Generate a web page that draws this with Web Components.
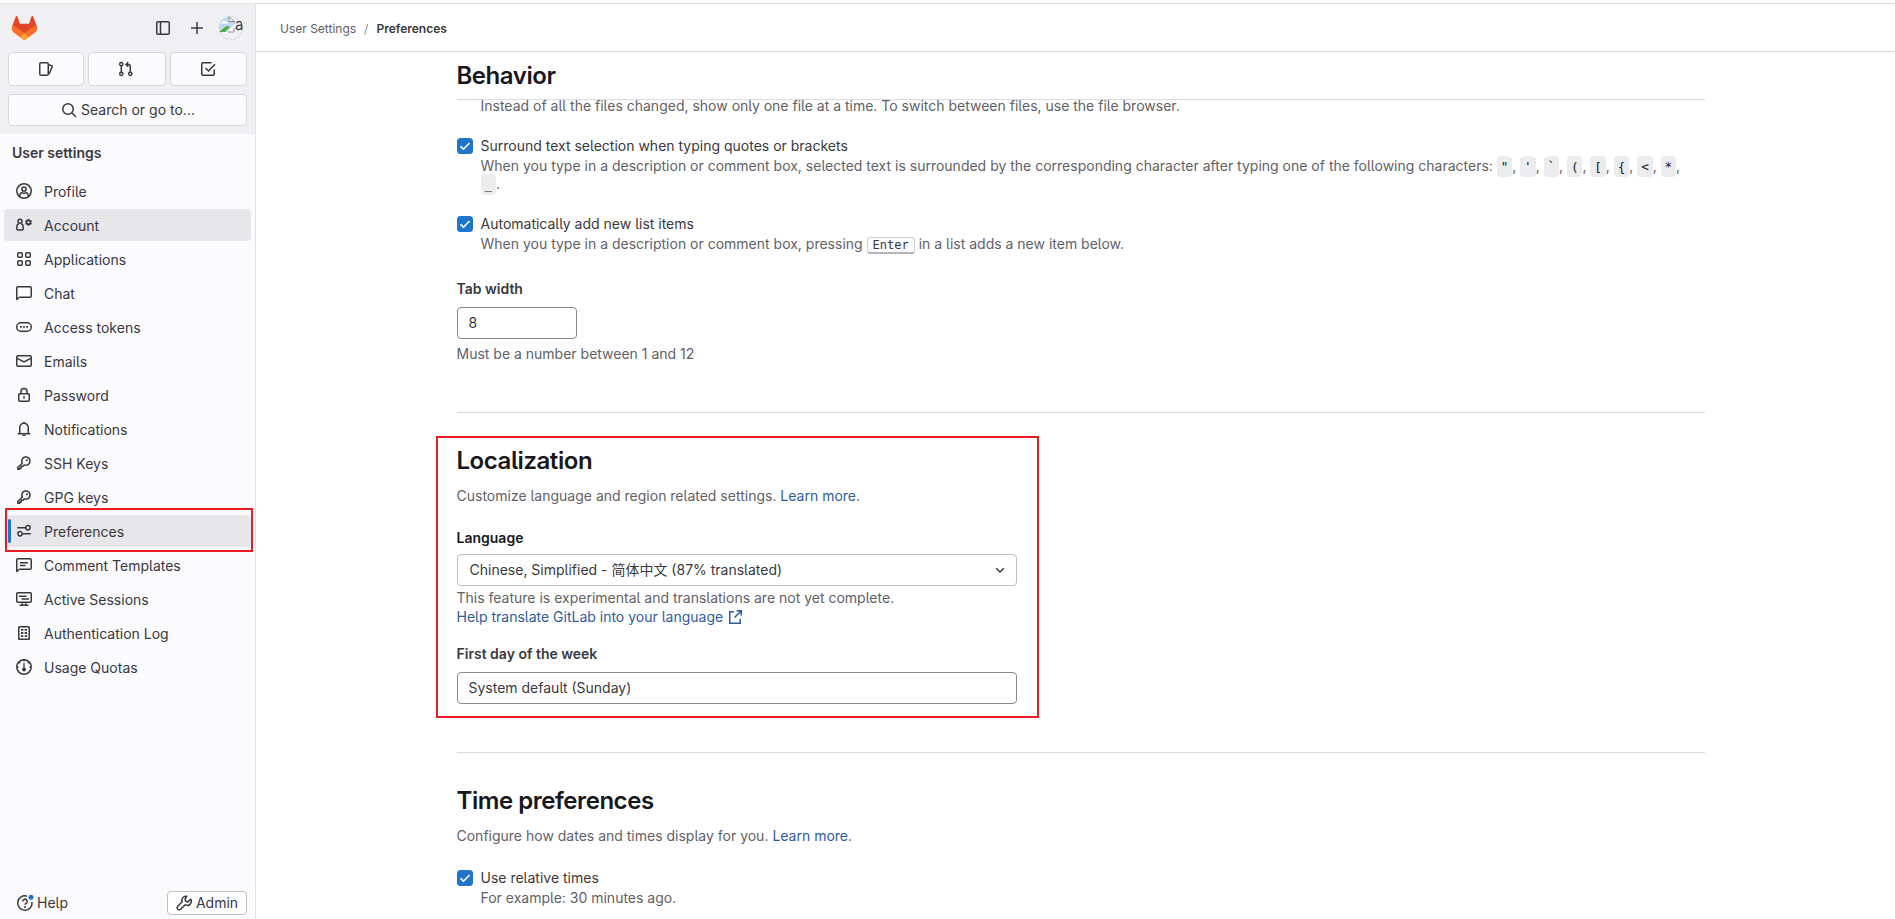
<!DOCTYPE html>
<html lang="en">
<head>
<meta charset="utf-8">
<title>Preferences · User Settings</title>
<style>
html,body{margin:0;height:100%;overflow:hidden;background:#fff}
body{font-family:Inter,"Noto Sans CJK SC",sans-serif;font-size:14px;line-height:20px;color:#3a383f;font-feature-settings:"cv05" 1}
</style>
</head>
<body>
<settings-app></settings-app>
<script>
const S='fill="none" stroke="currentColor" stroke-width="1.5"';
const ICONS={
 sidebar:`<g ${S}><rect x="1.75" y="1.75" width="12.5" height="12.5" rx="1.3"/><path d="M5.5 2v12"/></g>`,
 plus:`<path ${S} d="M8 2v12M2 8h12"/>`,
 issues:`<g ${S} stroke-linejoin="round"><rect x="1.75" y="1.75" width="8.5" height="12.5" rx="1.3"/><path d="M11 3.7l2.6.9c.5.2.8.6.6 1.2L11 13.2"/></g>`,
 merge:`<g ${S}><circle cx="3.3" cy="3.2" r="1.6"/><circle cx="3.3" cy="12.8" r="1.6"/><circle cx="12.3" cy="12.8" r="1.6"/><path d="M3.3 4.8v6.4M12.3 11.2V5.5a2 2 0 0 0-2-2H8M10.300 1.2L8 3.5l2.3 2.3"/></g>`,
 todo:`<g ${S}><path d="M11.5 1.75H3A1.25 1.25 0 0 0 1.75 3v10A1.25 1.25 0 0 0 3 14.25h10A1.25 1.25 0 0 0 14.25 13V8.5M5.5 7L8.5 10 15 3.3"/></g>`,
 search:`<g ${S}><circle cx="7" cy="7" r="5.25"/><path d="M10.8 10.8L15 15"/></g>`,
 profile:`<g ${S}><circle cx="8" cy="8" r="7.25"/><circle cx="8" cy="6" r="2.1"/><path d="M3.6 13.4c.1-.9.3-2 .9-2.9.3-.6.9-1 1.6-1.1.5.7 1.1 1 1.9 1s1.400-.3 1.900-1c.7.1 1.300.5 1.600 1.100.6.9.8 2 .9 2.900"/></g>`,
 account:`<g ${S}><circle cx="4" cy="4.300" r="2"/><path d="M2.700 6.500C1.500 7.100.75 8.400.75 10.200v1.250c0 .8.500 1.500 1.250 1.500h4c.750 0 1.250-.7 1.250-1.500V10.200c0-1.800-.750-3.100-1.950-3.700"/><circle cx="12.500" cy="5.300" r="2" stroke-width="1.700"/><path stroke-width="1.500" d="M12.500 1.800v1.800M12.500 7v1.800M9.450 3.550l1.500.9M15.550 3.550l-1.500.9M9.450 7.050l1.500-.9M15.550 7.050l-1.500-.9"/></g>`,
 apps:`<g ${S}><rect x="1.750" y="1.750" width="4.500" height="4.500" rx="1"/><rect x="9.750" y="1.750" width="4.500" height="4.500" rx="1"/><rect x="1.750" y="9.750" width="4.500" height="4.500" rx="1"/><rect x="9.750" y="9.750" width="4.500" height="4.500" rx="1"/></g>`,
 chat:`<path ${S} stroke-linejoin="round" d="M.75 14.500V3c0-.7.550-1.250 1.250-1.250h12c.7 0 1.250.550 1.250 1.250v8c0 .7-.550 1.250-1.250 1.250H3.500z"/>`,
 token:`<rect ${S} x=".75" y="3.750" width="14.500" height="8.500" rx="4"/><path fill="currentColor" d="M4 7h1.800v1.800H4zM7.100 7h1.800v1.800H7.100zM10.200 7H12v1.800h-1.800z"/>`,
 mail:`<g ${S}><rect x=".75" y="2.750" width="14.500" height="10.500" rx="1.250"/><path d="M1.200 5.300L8 9l6.800-3.700"/></g>`,
 lock:`<g ${S}><rect x="2.750" y="6.750" width="10.500" height="7.500" rx="1"/><path d="M5 6.500V4.500a3 3 0 0 1 6 0v2M8 9.300v2.400" /></g>`,
 bell:`<g ${S}><path d="M3.750 12.500v-6a4.250 4.250 0 0 1 8.500 0v6M1.700 12.750h12.600M8 2.200V.8"/><path d="M6.300 14.250h3.400" stroke-width="1.300"/></g>`,
 key:`<g ${S} stroke-linejoin="round"><path d="M6.300 8.200A4.150 4.150 0 1 1 8.300 9.900L7 11.200H5.300v1.700H3.800v1.350H1.750V12.500z"/></g><circle cx="10.900" cy="5.200" r="1" fill="currentColor"/>`,
 prefs:`<g ${S}><circle cx="12" cy="4.750" r="2.150"/><circle cx="4" cy="10.750" r="2.150"/><path d="M1.200 4.750H9.800M6.200 10.750H14.800"/></g>`,
 comment:`<g ${S} stroke-linejoin="round"><path d="M.75 14.500V3c0-.7.550-1.250 1.250-1.250h12c.7 0 1.250.550 1.250 1.250v8c0 .7-.550 1.250-1.250 1.250H3.500z"/><path d="M4 5.750h8M4 8.500h5.500"/></g>`,
 monitor:`<g ${S}><rect x=".75" y="1.750" width="14.500" height="9.500" rx="1"/><path d="M3 5.250h7.500M5.500 8h7.500M6.200 11.500v2.500M9.800 11.500v2.500M3.500 14.250h9" stroke-width="1.400"/></g>`,
 log:`<rect ${S} x="2.750" y="1.750" width="10.500" height="12.500" rx=".8"/><path fill="currentColor" d="M5 4h2.300v1.800H5zM8.700 4H11v1.800H8.700zM5 7.100h2.300v1.800H5zM8.700 7.100H11v1.800H8.700zM5 10.200h2.300V12H5zM8.700 10.200H11V12H8.700z"/>`,
 quota:`<g ${S}><circle cx="8" cy="8" r="7.250"/><path d="M8 4v6M8 1v1.500M1 8h1.500M13.500 8H15M3.200 3.200l1 1M12.800 3.200l-1 1" stroke-width="1.300"/></g><circle cx="8" cy="10.500" r="1.900" fill="currentColor"/>`,
 wrench:`<path ${S} stroke-linejoin="round" d="M10.800 1.300a4 4 0 0 0-4.600 5.500L1.700 11.300a1.900 1.900 0 0 0 2.900 2.900l4.600-4.500a4 4 0 0 0 5.500-5.500L12 6.900 9.700 6.300 9.100 4z"/>`,
 external:`<path ${S} d="M7 2.750H2.750v11.500h10.500V10M9.500 1.750h4.750V6.500M14 2L7.500 8.500"/>`,
 chevron:`<path ${S} d="M4.200 6.200L8 10l3.800-3.800"/>`,
 help:`<g ${S}><path d="M10 1.200A7.200 7.200 0 1 0 15 7"/><path d="M5.800 6.400A2.200 2.200 0 1 1 9 8.300c-.7.400-1 .7-1 1.400"/></g><circle cx="8" cy="11.900" r="1" fill="currentColor"/><circle cx="14" cy="2.300" r="2.500" fill="#1f75cb"/>`
};
const define=(name,html)=>customElements.define(name,class extends HTMLElement{
 constructor(){super();this.attachShadow({mode:'open'})}
 connectedCallback(){this.shadowRoot.innerHTML=typeof html==='function'?html(this):html}
});
define('gl-icon',e=>`<style>:host{display:inline-block;width:16px;height:16px;flex:none}svg{display:block;width:100%;height:100%;overflow:visible}</style><svg viewBox="0 0 16 16">${ICONS[e.getAttribute('name')]}</svg>`);
define('tanuki-logo',`<style>:host{display:block;width:25px;height:24px}svg{display:block}</style>
<svg width="25" height="24" viewBox="0 0 25 24"><path fill="#e24329" d="m24.507 9.500-.034-.090L21.082.562a.896.896 0 0 0-1.694.091l-2.290 7.010H7.825L5.535.653a.898.898 0 0 0-1.694-.090L.451 9.411.416 9.500a6.297 6.297 0 0 0 2.090 7.278l.012.010.030.022 5.160 3.867 2.560 1.935 1.554 1.176a1.051 1.051 0 0 0 1.268 0l1.555-1.176 2.560-1.935 5.197-3.890.014-.010A6.297 6.297 0 0 0 24.507 9.500Z"/><path fill="#fc6d26" d="m24.507 9.500-.034-.090a11.440 11.440 0 0 0-4.560 2.051l-7.447 5.632 4.742 3.584 5.197-3.890.014-.010A6.297 6.297 0 0 0 24.507 9.500Z"/><path fill="#fca326" d="m7.707 20.677 2.560 1.935 1.555 1.176a1.051 1.051 0 0 0 1.268 0l1.555-1.176 2.560-1.935-4.743-3.584-4.755 3.584Z"/><path fill="#fc6d26" d="M5.010 11.461a11.430 11.430 0 0 0-4.560-2.050L.416 9.500a6.297 6.297 0 0 0 2.090 7.278l.012.010.030.022 5.160 3.867 4.745-3.584-7.444-5.632Z"/></svg>`);
define('user-avatar',`<style>:host{display:block;width:24px;height:24px;box-sizing:border-box;border-radius:50%;overflow:hidden;box-shadow:inset 0 0 0 1px #dfdfe3;font-size:15px;line-height:18px}div{display:flex}svg{flex:none}</style>
<div><svg width="16" height="17" viewBox="0 0 16 17"><path fill="#c3d8f5" d="M0 1h10l5 5v10H0z"/><path fill="#fff" stroke="#888" d="M10 .5l5 5h-5z"/><path fill="#fff" d="M2 7.500q0-2 2-2 1-2 3 0 2 0 2 2z"/><path fill="#4caf3f" d="M0 16l6-5q3-2 5 0l-5 5z"/><path fill="#fff" d="M16 8v9H7z"/><path stroke="#888" fill="none" d="M9 16h6v-4M15.500 5.500v2"/></svg><span>a</span></div>`);
define('icon-button',`<style>:host{display:flex;flex:1;height:34px;box-sizing:border-box;border:1px solid #d8d8dc;border-radius:4px;background:#fbfafd;align-items:center;justify-content:center;gap:3px}</style><slot></slot>`);
define('nav-item',e=>`<style>:host{display:flex;height:32px;margin:0 4px;padding:2px 0 0 12px;box-sizing:border-box;align-items:center;gap:12px;border-radius:4px;position:relative}
:host([active]){background:#e7e6e9}:host([current])::before{content:"";position:absolute;left:4px;top:4px;width:3px;height:24px;border-radius:2px;background:#1f75cb}
gl-icon{margin-bottom:2px}</style><gl-icon name="${e.getAttribute('icon')}"></gl-icon><span><slot></slot></span>`);
define('mark-box',`<style>:host{display:block;position:absolute;box-sizing:border-box;border:2px solid #ed1c24;z-index:5;pointer-events:none}</style>`);
define('app-sidebar',`<style>:host{display:flex;flex-direction:column;width:256px;box-sizing:border-box;border-right:1px solid #e2e2e6;background:#fbfafd;position:relative}
.top{background:#f0f0f3;height:130px;box-sizing:border-box;padding:12px 8px 8px}
.bar{display:flex;align-items:center;height:24px;padding:0 4px}.bar tanuki-logo{margin-right:auto}
.bar gl-icon+gl-icon{margin:0 14px 0 18px}
.row{display:flex;gap:4px;margin:12px 0 8px}.row icon-button+icon-button{padding-right:1px}.search{height:32px;gap:4px;padding-left:1px}
h2{font-size:14px;line-height:20px;font-weight:600;margin:9px 12px 12px}
nav{display:grid;gap:2px}
footer{margin-top:auto;display:flex;align-items:center;justify-content:space-between;padding:0 8px 4px 17px}
.help{display:flex;align-items:center;gap:4px}.admin{flex:none;width:80px;height:24px;border-color:#bfbfc3;background:#fff;gap:4px}
mark-box{left:5px;top:504px;width:248px;height:44px}</style>
<div class="top"><div class="bar"><tanuki-logo></tanuki-logo><gl-icon name="sidebar"></gl-icon><gl-icon name="plus"></gl-icon><user-avatar></user-avatar></div>
<div class="row"><icon-button><gl-icon name="issues"></gl-icon></icon-button><icon-button><gl-icon name="merge"></gl-icon></icon-button><icon-button><gl-icon name="todo"></gl-icon></icon-button></div>
<icon-button class="search"><gl-icon name="search"></gl-icon><span>Search or go to...</span></icon-button></div>
<h2>User settings</h2>
<nav><nav-item icon="profile">Profile</nav-item><nav-item icon="account" active>Account</nav-item><nav-item icon="apps">Applications</nav-item><nav-item icon="chat">Chat</nav-item><nav-item icon="token">Access tokens</nav-item><nav-item icon="mail">Emails</nav-item><nav-item icon="lock">Password</nav-item><nav-item icon="bell">Notifications</nav-item><nav-item icon="key">SSH Keys</nav-item><nav-item icon="key">GPG keys</nav-item><nav-item icon="prefs" active current>Preferences</nav-item><nav-item icon="comment">Comment Templates</nav-item><nav-item icon="monitor">Active Sessions</nav-item><nav-item icon="log">Authentication Log</nav-item><nav-item icon="quota">Usage Quotas</nav-item></nav>
<footer><span class="help"><gl-icon name="help"></gl-icon><span>Help</span></span><icon-button class="admin"><gl-icon name="wrench"></gl-icon><span>Admin</span></icon-button></footer>
<mark-box></mark-box>`);
define('bread-crumbs',`<style>:host{display:flex;height:45px;border-bottom:1px solid #dcdcde;padding:2px 0 0 24px;align-items:center;gap:8px;font-size:12px;line-height:16px;color:#626168}b{font-weight:600;color:#3a383f}i{font-style:normal;color:#89888d}</style><span>User Settings</span><i>/</i><b>Preferences</b>`);
define('section-title',`<style>:host{display:block;font-size:24px;line-height:30px;font-weight:600;color:#18171d;letter-spacing:-.45px}</style><slot></slot>`);
define('check-row',`<style>:host{display:grid;grid-template-columns:16px 1fr;column-gap:8px}svg{margin-top:2px}.d{grid-column:2;color:#626168;line-height:18px;margin-top:1px}</style>
<svg width="16" height="16" viewBox="0 0 16 16"><rect width="16" height="16" rx="3.500" fill="#1f75cb"/><path d="M3.500 8.300l3 2.900 6-6.200" fill="none" stroke="#fff" stroke-width="1.600"/></svg><span><slot></slot></span><div class="d"><slot name="desc"></slot></div>`);
define('form-label',`<style>:host{display:block;font-weight:600;line-height:20px}</style><slot></slot>`);
define('text-field',`<style>:host{display:flex;align-items:center;justify-content:space-between;height:32px;box-sizing:border-box;border:1px solid #89888d;border-radius:4px;padding:0 8px 0 11px;background:#fff}</style><slot></slot>`);
define('code-chip',`<style>:host{padding:3px 3.9px;border-radius:4px;background:#ececef;color:#18171d;font:12.700px/14px "DejaVu Sans Mono",monospace}</style><slot></slot>`);
define('key-cap',`<style>:host{display:inline-block;box-sizing:border-box;height:17px;margin:-1px 0;padding:0 5px;border:1px solid #cfcfd4;border-bottom:2px solid #b4b4ba;border-radius:3px;background:#fbfafd;color:#3a383f;font:12px/15px "DejaVu Sans Mono",monospace}</style><slot></slot>`);
define('page-link',`<style>:host{color:#2f5ca0}</style><slot></slot>`);
define('preferences-page',`<style>:host{display:block;width:1248px;margin-left:200.5px;position:relative}
.behavior{height:48px;border-bottom:1px solid #dcdcde;box-sizing:border-box;padding-top:9px}
p{margin:0;color:#626168;line-height:20px}.cut{margin-left:24px;height:17px;display:flex;align-items:flex-end;margin-top:-1px}
.r1{margin-top:20px;width:1240px}.r2{margin-top:21px;height:39px}
.tab{margin-top:26px}.num{width:120px;margin:8px 0 5px}
hr{border:0;border-top:1px solid #dcdcde;margin:0}
.loc{width:560px}
mark-box{left:-20.5px;top:384px;width:603px;height:282px}</style>
<div class="behavior"><section-title>Behavior</section-title></div>
<p class="cut">Instead of all the files changed, show only one file at a time. To switch between files, use the file browser.</p>
<check-row class="r1">Surround text selection when typing quotes or brackets<span slot="desc">When you type in a description or comment box, selected text is surrounded by the corresponding character after typing one of the following characters: <code-chip>"</code-chip>, <code-chip>'</code-chip>, <code-chip>\`</code-chip>, <code-chip>(</code-chip>, <code-chip>[</code-chip>, <code-chip>{</code-chip>, <code-chip>&lt;</code-chip>, <code-chip>*</code-chip>, <code-chip>_</code-chip>.</span></check-row>
<check-row class="r2">Automatically add new list items<span slot="desc">When you type in a description or comment box, pressing <key-cap>Enter</key-cap> in a list adds a new item below.</span></check-row>
<form-label class="tab">Tab width</form-label><text-field class="num">8</text-field><p>Must be a number between 1 and 12</p>
<hr style="margin:48px 0 33px">
<section class="loc"><section-title>Localization</section-title><p style="margin:10px 0 22px">Customize language and region related settings. <page-link>Learn more.</page-link></p>
<form-label style="color:#18171d">Language</form-label><text-field style="margin:6px 0 2px;border-color:#bfbfc3;padding-left:12px"><span>Chinese, Simplified - 简体中文 (87% translated)</span><gl-icon name="chevron"></gl-icon></text-field>
<p style="line-height:19px;height:38px">This feature is experimental and translations are not yet complete.<br><page-link>Help translate GitLab into your language <gl-icon name="external" style="vertical-align:-3px"></gl-icon></page-link></p>
<form-label style="margin:18px 0 8px">First day of the week</form-label><text-field>System default (Sunday)</text-field></section>
<hr style="margin:48px 0 33px">
<section-title>Time preferences</section-title><p style="margin:10px 0 22px">Configure how dates and times display for you. <page-link>Learn more.</page-link></p>
<check-row>Use relative times<span slot="desc">For example: 30 minutes ago.</span></check-row>
<mark-box></mark-box>`);
define('settings-app',`<style>:host{display:grid;grid-template:3px 1px 915px / 256px 1fr;height:919px;overflow:hidden}
.line{grid-area:2/1/3/3;background:#e0e0e2}app-sidebar{grid-area:3/1}main{grid-area:3/2;overflow:hidden}</style>
<div class="line"></div><app-sidebar></app-sidebar><main><bread-crumbs></bread-crumbs><preferences-page></preferences-page></main>`);
</script>
</body>
</html>
